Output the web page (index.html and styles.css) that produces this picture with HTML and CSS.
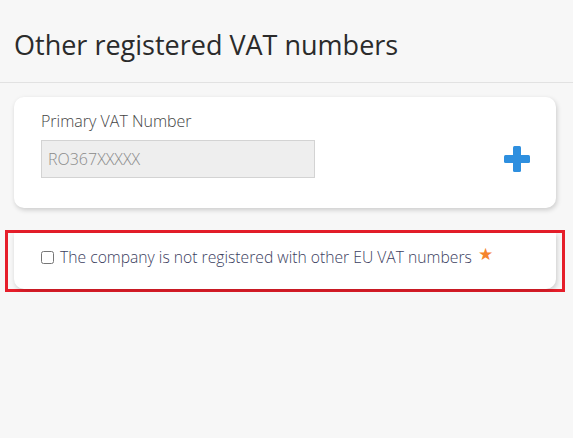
FILE: index.html
```html
<!DOCTYPE html>
<html>
<head>
    <title>Other registered VAT numbers</title>
    <link rel="stylesheet" href="styles.css">
</head>
<body>
    <h1 class="page-title">Other registered VAT numbers</h1>

    <div class="content">
        <div class="card vat-card">
            <div class="field">
                <label for="primaryVat">Primary VAT Number</label>
                <input type="text" id="primaryVat" value="RO367XXXXX" disabled>
            </div>
            <button class="add-btn" type="button" aria-label="Add VAT number">
                <svg width="26" height="26" viewBox="0 0 26 26">
                    <rect x="9" y="0" width="8" height="26" rx="1.5" fill="#2e8fdf"/>
                    <rect x="0" y="9" width="26" height="8" rx="1.5" fill="#2e8fdf"/>
                </svg>
            </button>
        </div>

        <div class="highlight">
            <div class="card check-card">
                <label class="check">
                    <input type="checkbox" id="noOtherVat">
                    <span>The company is not registered with other EU VAT numbers</span>
                    <span class="required">&#9733;</span>
                </label>
            </div>
        </div>
    </div>
</body>
</html>
```

FILE: styles.css
```css
body {
    margin: 0;
    font-family: "Open Sans", Arial, sans-serif;
    background-color: #f7f7f7;
    color: #333;
}

.page-title {
    margin: 0;
    padding: 27px 14px 0;
    height: 55px;
    font-size: 27px;
    line-height: 36px;
    font-weight: 400;
    color: #2b2b2b;
    border-bottom: 1px solid #e2e2e2;
}

.content {
    padding: 14px 17px 0 14px;
}

.card {
    background-color: #fff;
    border-radius: 10px;
    box-shadow: 1px 2px 5px rgba(0, 0, 0, 0.18);
}

.vat-card {
    display: flex;
    align-items: flex-start;
    justify-content: space-between;
    height: 111px;
    padding: 13px 26px 0 27px;
    box-sizing: border-box;
}

.field label {
    display: block;
    font-size: 16px;
    line-height: 22px;
    font-weight: 300;
    color: #444;
    margin-bottom: 8px;
}

.field input {
    width: 274px;
    height: 38px;
    box-sizing: border-box;
    padding: 0 6px;
    border: 1px solid #d3d3d3;
    background-color: #eeeeee;
    font-family: "Open Sans", Arial, sans-serif;
    font-size: 16px;
    font-weight: 300;
    color: #8a8a8a;
}

.add-btn {
    background: none;
    border: none;
    padding: 0;
    margin-top: 36px;
    cursor: pointer;
    line-height: 0;
}

.highlight {
    margin: 22px -9px 0;
    border: 3px solid #e61e2a;
    padding: 0 6px 0 6px;
    height: 62px;
    box-sizing: border-box;
}

.check-card {
    height: 56px;
    padding: 13px 27px 0;
    box-sizing: border-box;
    border-radius: 0 0 10px 10px;
}

.check {
    display: flex;
    align-items: center;
    font-size: 15.7px;
    line-height: 22px;
    font-weight: 300;
    color: #3b4060;
}

.check input {
    width: 13px;
    height: 13px;
    margin: 0 6px 0 0;
}

.required {
    color: #f5842c;
    font-size: 17px;
    margin-left: 6px;
    position: relative;
    top: -3px;
}
```
